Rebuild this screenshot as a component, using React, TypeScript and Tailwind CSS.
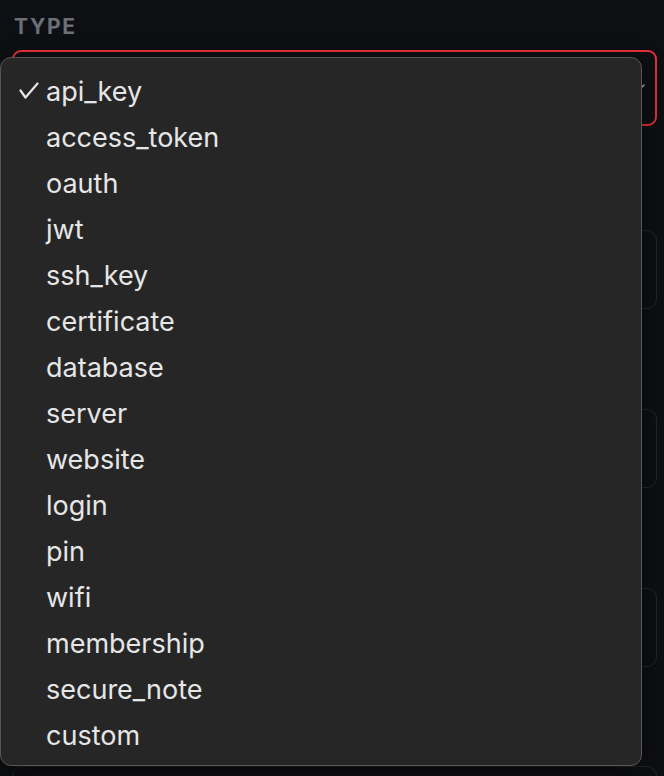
import React from 'react'

const TYPES = [
  'api_key',
  'access_token',
  'oauth',
  'jwt',
  'ssh_key',
  'certificate',
  'database',
  'server',
  'website',
  'login',
  'pin',
  'wifi',
  'membership',
  'secure_note',
  'custom'
]

function Field({ top }: { top: string }) {
  return <div className={`${top} h-[79px] rounded-[10px] border border-[#24262b] bg-[#0e0f12]`}></div>
}

function Check() {
  return (
    <svg width="20" height="18" viewBox="0 0 20 18" className="text-[#e6e6e6]">
      <path d="M1.5 8.5 L6.5 15.5 L18.5 1.5" stroke="currentColor" strokeWidth="2.2" fill="none" strokeLinecap="round" strokeLinejoin="round" />
    </svg>
  )
}

export default function App() {
  const selected = 'api_key'
  return (
    <div className="relative h-[776px] w-[664px] overflow-hidden bg-[#0e0f12] font-['Inter',sans-serif]">
      <div className="pl-3 pr-[7px] pt-[15px]">
        <div className="pl-[2px] text-[21px] font-bold leading-[24px] tracking-[0.08em] text-[#6b6f78]">TYPE</div>
        <div className="mt-[11px] flex h-[76px] items-center justify-end rounded-[9px] border-2 border-[#e5303a] pr-[9px]">
          <svg width="10" height="10" viewBox="0 0 10 10" className="text-[#c8c8c8]">
            <path d="M2 8 L8 2" stroke="currentColor" strokeWidth="1.4" fill="none" strokeLinecap="round" />
          </svg>
        </div>
        <Field top="mt-[104px]" />
        <Field top="mt-[100px]" />
        <Field top="mt-[100px]" />
        <Field top="mt-[99px]" />
      </div>

      <div className="absolute left-0 top-[57px] w-[642px] rounded-[11px] border border-[#565656] bg-[#262626] pb-[7px] pt-[10px] shadow-[0_8px_24px_rgba(0,0,0,0.5)]">
        {TYPES.map((t) => (
          <div key={t} className="flex h-[46px] items-center pl-[18px] text-[27px] leading-none text-[#e6e6e6]">
            <span className="flex w-[27px] items-center">{t === selected ? <Check /> : null}</span>
            <span>{t}</span>
          </div>
        ))}
      </div>
    </div>
  )
}
